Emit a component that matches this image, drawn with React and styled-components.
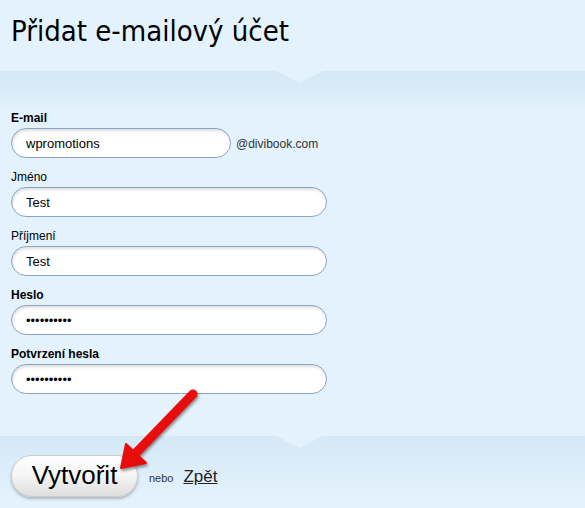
import React from "react";
import styled, { createGlobalStyle } from "styled-components";

const Global = createGlobalStyle`
  html, body { margin: 0; padding: 0; }
  body {
    background: #e3f2fd;
    font-family: "Liberation Sans", Arial, sans-serif;
    color: #000;
  }
`;

const Page = styled.div`
  position: relative;
  width: 585px;
  height: 508px;
  overflow: hidden;
  background: #e3f2fd;
`;

const Header = styled.header`
  height: 71px;
  box-sizing: border-box;
  padding: 14px 0 0 11px;
`;

const Title = styled.h1`
  margin: 0;
  font-family: "DejaVu Sans Condensed", "DejaVu Sans", sans-serif;
  font-weight: normal;
  font-size: 29px;
  line-height: normal;
  color: #000;
`;

const Band = styled.section`
  position: relative;
  background: linear-gradient(#d5e8f6 0px, #d8eaf7 14px, #e3f2fd ${(p) => p.$fade}px);
  padding: ${(p) => p.$pad};
  &::before {
    content: "";
    position: absolute;
    top: 0;
    left: 276px;
    width: 47px;
    height: 12px;
    background: #e3f2fd;
    clip-path: polygon(0 0, 100% 0, 50% 100%);
  }
`;

const Form = styled.div`
  display: flex;
  flex-direction: column;
  gap: 12px;
  padding-left: 11px;
`;

const Field = styled.div`
  display: flex;
  flex-direction: column;
  gap: 3px;
`;

const Label = styled.label`
  font-size: 12px;
  line-height: 14px;
  font-weight: ${(p) => (p.$bold ? "bold" : "normal")};
  color: #000;
`;

const Row = styled.div`
  display: flex;
  align-items: center;
  gap: 5px;
`;

const Input = styled.input`
  box-sizing: border-box;
  width: ${(p) => p.$w}px;
  height: 30px;
  border: 1px solid #8aa4c8;
  border-radius: 15px;
  background: #fff;
  box-shadow: inset 1px 2px 3px rgba(0, 0, 0, 0.13);
  padding: 0 0 0 14px;
  font-family: "Liberation Sans", Arial, sans-serif;
  font-size: 13px;
  color: #000;
  outline: none;
`;

const Domain = styled.span`
  font-size: 12px;
  color: #333;
  padding-top: 2px;
`;

const Actions = styled.div`
  display: flex;
  align-items: center;
  padding-left: 11px;
`;

const Button = styled.button`
  box-sizing: border-box;
  width: 127px;
  height: 42px;
  border: 1px solid #c9ccd0;
  border-radius: 21px;
  background: linear-gradient(#ffffff 0%, #f6f6f6 45%, #dedede 100%);
  box-shadow: 0 2px 3px rgba(0, 0, 0, 0.25);
  font-family: "Liberation Sans", Arial, sans-serif;
  font-size: 26px;
  color: #000;
  padding: 0 0 2px;
  cursor: pointer;
`;

const Or = styled.span`
  font-size: 11px;
  color: #333;
  margin: 4px 0 0 11px;
`;

const BackLink = styled.a`
  font-size: 17px;
  color: #222;
  text-decoration: underline;
  margin: 2px 0 0 10px;
`;

const Arrow = styled.svg`
  position: absolute;
  left: 0;
  top: 0;
  pointer-events: none;
`;

const fields = [
  { label: "E-mail", bold: true, value: "wpromotions", w: 220, domain: "@divibook.com" },
  { label: "Jméno", value: "Test", w: 316 },
  { label: "Příjmení", value: "Test", w: 316 },
  { label: "Heslo", bold: true, value: "0123456789", w: 316, type: "password" },
  { label: "Potvrzení hesla", bold: true, value: "0123456789", w: 316, type: "password" },
];

export default function App() {
  return (
    <Page>
      <Global />
      <Header>
        <Title>Přidat e-mailový účet</Title>
      </Header>
      <Band $pad="40px 0 42px" $fade={40}>
        <Form>
          {fields.map((f) => (
            <Field key={f.label}>
              <Label $bold={f.bold}>{f.label}</Label>
              <Row>
                <Input $w={f.w} type={f.type || "text"} defaultValue={f.value} readOnly />
                {f.domain && <Domain>{f.domain}</Domain>}
              </Row>
            </Field>
          ))}
        </Form>
      </Band>
      <Band $pad="19px 0 20px" $fade={60}>
        <Actions>
          <Button>Vytvořit</Button>
          <Or>nebo</Or>
          <BackLink href="#">Zpět</BackLink>
        </Actions>
      </Band>
      <Arrow width="585" height="508" viewBox="0 0 585 508">
        <defs>
          <filter id="sh" x="-20%" y="-20%" width="140%" height="140%">
            <feDropShadow dx="1" dy="2" stdDeviation="1.5" floodColor="#000" floodOpacity="0.45" />
          </filter>
        </defs>
        <g filter="url(#sh)">
          <line x1="193" y1="394" x2="134" y2="455" stroke="#e80c0c" strokeWidth="9" strokeLinecap="round" />
          <polygon points="121,468 126,444 146,463" fill="#e80c0c" stroke="#e80c0c" strokeWidth="2" strokeLinejoin="round" />
        </g>
      </Arrow>
    </Page>
  );
}
